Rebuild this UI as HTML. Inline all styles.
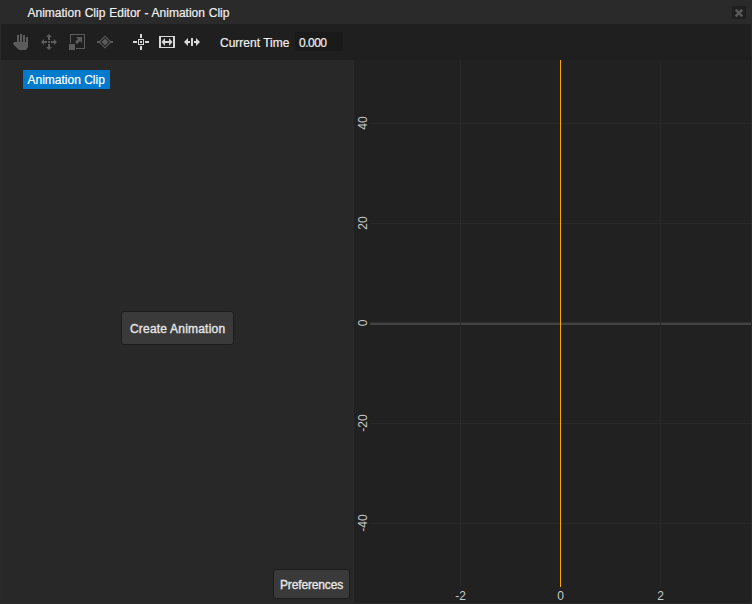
<!DOCTYPE html>
<html><head><meta charset="utf-8">
<style>
html,body{margin:0;padding:0;}
body{width:752px;height:604px;position:relative;overflow:hidden;background:#2a2a2a;font-family:"Liberation Sans",sans-serif;font-size:12px;color:#f0f0f0;}
.abs{position:absolute;}
.t{position:absolute;white-space:nowrap;line-height:1;-webkit-text-stroke:0.2px currentColor;}
#title{left:0;top:0;width:752px;height:24px;background:#2a2a2a;}
#toolbar{left:1px;top:24px;width:750px;height:36px;background:#1f1f1f;}
#left{left:1px;top:60px;width:352px;height:543px;background:#282828;}
#graph{left:355px;top:60px;width:396px;height:543px;background:#212121;overflow:hidden;}
.btn{position:absolute;background:#3a3a3a;border:1px solid #1c1c1c;border-radius:3px;box-sizing:border-box;}
.hl{position:absolute;height:1px;background:#292929;}
.vl{position:absolute;width:1px;background:#2a2a2a;}
.ax{position:absolute;color:#c8c8c8;font-size:12px;line-height:1;white-space:nowrap;}
.yl{left:7.5px;transform:translate(-50%,-50%) rotate(-90deg);}
.xl{top:536px;transform:translate(-50%,-50%);}
</style></head><body>
<div id="title" class="abs">
  <div class="t" style="left:27.5px;top:7px;word-spacing:0.5px;">Animation Clip Editor - Animation Clip</div>
  <div class="abs" style="left:732px;top:6px;width:14px;height:13px;background:#1f1f1f;"></div>
  <svg class="abs" style="left:732px;top:6px" width="14" height="13" viewBox="0 0 14 13">
    <path d="M3.7 3.7 L10.3 10.3 M10.3 3.7 L3.7 10.3" stroke="#585858" stroke-width="2.6"/>
  </svg>
</div>
<div id="toolbar" class="abs">
</div>
<!-- toolbar icons (absolute to body) -->
<svg class="abs" style="left:0;top:24px" width="210" height="36" viewBox="0 24 210 36">
  <!-- hand -->
  <g fill="#5c5c5c">
    <rect x="17" y="35" width="2" height="9"/>
    <rect x="20" y="34" width="2" height="10"/>
    <rect x="23" y="35" width="2" height="9"/>
    <rect x="26" y="37" width="2" height="8"/>
    <path d="M17 42 L28 42 L28 47 L26 50 L19 50 L13 44 L14 42 Z"/>
  </g>
  <!-- move -->
  <g fill="#5c5c5c">
    <path d="M49 34 L52 37 L50 37 L50 40 L48 40 L48 37 L46 37 Z"/>
    <path d="M49 50 L52 47 L50 47 L50 44 L48 44 L48 47 L46 47 Z"/>
    <path d="M41 42 L44 39 L44 41 L47 41 L47 43 L44 43 L44 45 Z"/>
    <path d="M57 42 L54 39 L54 41 L51 41 L51 43 L54 43 L54 45 Z"/>
    <rect x="48" y="41" width="2" height="2"/>
  </g>
  <!-- scale -->
  <g fill="#5c5c5c">
    <path d="M70 34 H85 V49 H76 V48 H84 V35 H71 V43 H70 Z"/>
    <rect x="69" y="44" width="6" height="6"/>
    <path d="M76 37 L82 37 L82 43 L80 41 L77 44 L75 42 L78 39 Z"/>
  </g>
  <!-- diamond -->
  <g fill="#5c5c5c">
    <path d="M105 35.5 L111.5 42 L105 48.5 L98.5 42 Z M105 37 L100 42 L105 47 L110 42 Z" fill-rule="evenodd"/>
    <path d="M105 38.5 L108.5 42 L105 45.5 L101.5 42 Z"/>
    <rect x="97" y="41" width="3" height="2"/>
    <rect x="110" y="41" width="3" height="2"/>
  </g>
  <!-- crosshair -->
  <g fill="#d8d8d8">
    <rect x="140" y="34" width="2" height="4"/>
    <rect x="140" y="46" width="2" height="4"/>
    <rect x="133" y="41" width="4" height="2"/>
    <rect x="145" y="41" width="4" height="2"/>
    <path d="M138 39 H144 V45 H138 Z M139 40 V44 H143 V40 Z" fill-rule="evenodd"/>
    <rect x="140" y="41" width="2" height="2"/>
  </g>
  <!-- fit box -->
  <g fill="#d8d8d8">
    <path d="M159 36 H175 V48 H159 Z M161 37 V47 H173 V37 Z" fill-rule="evenodd"/>
    <path d="M161.5 42 L165 38 L165 41 L169 41 L169 38 L172.5 42 L169 46 L169 43 L165 43 L165 46 Z"/>
  </g>
  <!-- spread arrows -->
  <g fill="#d8d8d8">
    <rect x="191" y="38" width="2" height="8"/>
    <path d="M184 42 L188 38 L188 41 L190 41 L190 43 L188 43 L188 46 Z"/>
    <path d="M200 42 L196 38 L196 41 L194 41 L194 43 L196 43 L196 46 Z"/>
  </g>
</svg>
<div class="t" style="left:220px;top:37px;">Current Time</div>
<div class="abs" style="left:295px;top:32px;width:48px;height:19px;background:#1a1a1a;border-radius:2px;"></div>
<div class="t" style="left:299px;top:37px;letter-spacing:-0.5px;">0.000</div>

<div id="left" class="abs">
  <div class="abs" style="left:22px;top:10px;width:87px;height:19px;background:#007acc;"></div>
  <div class="t" style="left:26.5px;top:14px;color:#fff;">Animation Clip</div>
  <div class="btn" style="left:120px;top:251px;width:113px;height:34px;"></div>
  <div class="t" style="left:129px;top:263px;color:#e6e6e6;letter-spacing:0.2px;-webkit-text-stroke:0.35px #e6e6e6;">Create Animation</div>
  <div class="btn" style="left:272px;top:509px;width:77px;height:30px;"></div>
  <div class="t" style="left:279px;top:519px;color:#e6e6e6;letter-spacing:-0.15px;-webkit-text-stroke:0.35px #e6e6e6;">Preferences</div>
</div>
<div class="abs" style="left:353px;top:60px;width:1px;height:543px;background:#2b2b2b;"></div>
<div class="abs" style="left:354px;top:60px;width:1px;height:543px;background:#1f1f1f;"></div>

<div id="graph" class="abs">
  <!-- horizontal grid (graph coords: x-355, y-60) -->
  <div class="hl" style="left:15px;top:63px;width:381px;"></div>
  <div class="hl" style="left:15px;top:163px;width:381px;"></div>
  <div class="hl" style="left:15px;top:262px;width:381px;height:1px;background:#2e2e2e;"></div>
  <div class="hl" style="left:15px;top:263px;width:381px;height:2px;background:#434343;"></div>
  <div class="hl" style="left:15px;top:363px;width:381px;"></div>
  <div class="hl" style="left:15px;top:463px;width:381px;"></div>
  <!-- vertical grid -->
  <div class="vl" style="left:105px;top:0;height:527px;"></div>
  <div class="vl" style="left:305px;top:0;height:527px;background:#272727;"></div>
  <div class="vl" style="left:205px;top:0;height:527px;background:#ffa500;"></div>
  <!-- y labels -->
  <div class="ax yl" style="top:63px;">40</div>
  <div class="ax yl" style="top:163px;">20</div>
  <div class="ax yl" style="top:263px;">0</div>
  <div class="ax yl" style="top:363px;">-20</div>
  <div class="ax yl" style="top:463px;">-40</div>
  <!-- x labels -->
  <div class="ax xl" style="left:105.5px;">-2</div>
  <div class="ax xl" style="left:205.5px;">0</div>
  <div class="ax xl" style="left:305.5px;">2</div>
</div>
</body></html>
